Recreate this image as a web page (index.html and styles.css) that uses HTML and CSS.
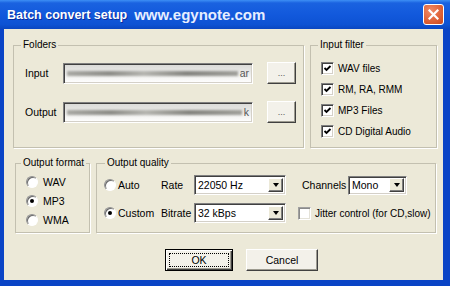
FILE: index.html
```html
<!DOCTYPE html>
<html lang="en">
<head>
  <meta charset="UTF-8">
  <meta name="viewport" content="width=device-width, initial-scale=1.0">
  <title>Batch convert setup</title>
  <link rel="stylesheet" href="styles.css">
</head>
<body>

<div class="window">
  <div class="titlebar">
    <span class="title">Batch convert setup</span>
    <span class="site">www.egynote.com</span>
    <span class="close">
      <svg width="11" height="11" viewBox="0 0 11 11"><path d="M1.5 1.5 L9.5 9.5 M9.5 1.5 L1.5 9.5" stroke="#fff" stroke-width="2.2" stroke-linecap="square"/></svg>
    </span>
  </div>

  <div class="client">
    <div class="row">
      <fieldset class="group folders">
        <legend>Folders</legend>
        <div class="folder-row">
          <span class="folder-label">Input</span>
          <div class="field"><span class="smudge"></span><span class="tail">ar</span></div>
          <button class="btn browse">...</button>
        </div>
        <div class="folder-row">
          <span class="folder-label">Output</span>
          <div class="field"><span class="smudge"></span><span class="tail">k</span></div>
          <button class="btn browse">...</button>
        </div>
      </fieldset>

      <fieldset class="group filter">
        <legend>Input filter</legend>
        <div class="check-item"><span class="checkbox"><svg width="9" height="9" viewBox="0 0 9 9"><path d="M1.5 4 L3.5 6 L7.5 2" fill="none" stroke="#000" stroke-width="1.8"/></svg></span>WAV files</div>
        <div class="check-item"><span class="checkbox"><svg width="9" height="9" viewBox="0 0 9 9"><path d="M1.5 4 L3.5 6 L7.5 2" fill="none" stroke="#000" stroke-width="1.8"/></svg></span>RM, RA, RMM</div>
        <div class="check-item"><span class="checkbox"><svg width="9" height="9" viewBox="0 0 9 9"><path d="M1.5 4 L3.5 6 L7.5 2" fill="none" stroke="#000" stroke-width="1.8"/></svg></span>MP3 Files</div>
        <div class="check-item"><span class="checkbox"><svg width="9" height="9" viewBox="0 0 9 9"><path d="M1.5 4 L3.5 6 L7.5 2" fill="none" stroke="#000" stroke-width="1.8"/></svg></span>CD Digital Audio</div>
      </fieldset>
    </div>

    <div class="row second">
      <fieldset class="group format">
        <legend>Output format</legend>
        <div class="radio-item"><span class="radio"></span>WAV</div>
        <div class="radio-item"><span class="radio on"></span>MP3</div>
        <div class="radio-item"><span class="radio"></span>WMA</div>
      </fieldset>

      <fieldset class="group quality">
        <legend>Output quality</legend>
        <div class="q-row">
          <span class="q-radio"><span class="radio"></span>Auto</span>
          <span class="q-label">Rate</span>
          <div class="combo"><span>22050 Hz</span><span class="arrow"></span></div>
          <span class="channels-label">Channels</span>
          <div class="combo small"><span>Mono</span><span class="arrow"></span></div>
        </div>
        <div class="q-row">
          <span class="q-radio"><span class="radio on"></span>Custom</span>
          <span class="q-label">Bitrate</span>
          <div class="combo"><span>32 kBps</span><span class="arrow"></span></div>
          <span class="jitter"><span class="checkbox"></span>Jitter control (for CD,slow)</span>
        </div>
      </fieldset>
    </div>

    <div class="actions">
      <button class="btn default"><span class="focus">OK</span></button>
      <button class="btn">Cancel</button>
    </div>
  </div>
</div>

</body>
</html>
```

FILE: styles.css
```css
/* Window frame */
body {
  margin: 0;
  font-family: 'Liberation Sans', Arial, sans-serif;
  font-size: 10px;
  color: #000;
}

.window {
  width: 450px;
  height: 286px;
  display: flex;
  flex-direction: column;
  background: #0a44c6;
}

.titlebar {
  height: 29px;
  flex: none;
  display: flex;
  align-items: center;
  padding: 0 6px 0 7px;
  color: #fff;
  background: linear-gradient(#3d8ff5 0, #1a62e0 3px, #1259dc 50%, #0d52d3 85%, #0a46c0 100%);
}

.title {
  font-weight: bold;
  font-size: 12.5px;
  text-shadow: 1px 1px #0c2c9c;
}

.site {
  margin-left: 7px;
  font-weight: bold;
  font-size: 15px;
  color: #e6eeff;
}

.close {
  margin-left: auto;
  width: 21px;
  height: 21px;
  box-sizing: border-box;
  border: 1px solid #fff;
  border-radius: 3px;
  background: radial-gradient(circle at 35% 30%, #f08a67, #db5a2e 70%, #c8481f);
  display: flex;
  align-items: center;
  justify-content: center;
}

.client {
  flex: 1;
  margin: 0 7px 6px 4px;
  background: #ece9d8;
  padding: 10px 0 0 9px;
}

/* Group boxes */
.row {
  display: flex;
  gap: 6px;
}

.row.second {
  margin-top: 9px;
  margin-left: 2px;
}

.group {
  margin: 0;
  padding: 0;
  min-width: 0;
  box-sizing: border-box;
  border: 1px solid #c3c0b0;
  box-shadow: 1px 1px 0 #fff;
}

.group legend {
  padding: 0 2px;
  line-height: 12px;
  white-space: nowrap;
  background: #ece9d8;
}

.folders {
  width: 291px;
  height: 109px;
  padding: 11px 0 0 11px;
}

.folders legend {
  margin-left: -4px;
}

.filter {
  width: 127px;
  height: 109px;
  padding: 11px 0 0 10px;
}

.filter legend {
  margin-left: -3px;
}

.format {
  width: 75px;
  height: 76px;
  padding: 6px 0 0 10px;
}

.format legend {
  margin-left: -5px;
}

.quality {
  width: 340px;
  height: 76px;
  padding: 6px 0 0 7px;
}

.quality legend {
  margin-left: 1px;
}

/* Folders */
.folder-row {
  display: flex;
  align-items: center;
  height: 22px;
}

.folder-row + .folder-row {
  margin-top: 17px;
}

.folder-label {
  width: 38px;
  font-size: 10.5px;
}

.field {
  width: 190px;
  height: 21px;
  box-sizing: border-box;
  display: flex;
  align-items: center;
  padding: 0 3px;
  border: 1px solid;
  border-color: #808080 #fff #fff #808080;
  box-shadow: inset 1px 1px #404040, inset -1px -1px #d4d0c8;
  background: linear-gradient(#d9d9d6, #f4f4f2 70%, #fff);
}

.smudge {
  flex: 1;
  height: 5px;
  margin-right: 2px;
  background: linear-gradient(90deg, #a9a9a4, #8d8d88 25%, #b5b5b0 45%, #858580 70%, #a0a09b);
  filter: blur(1.2px);
}

.tail {
  color: #555;
  font-size: 10.5px;
}

.btn {
  font: inherit;
  color: #000;
  box-sizing: border-box;
  padding: 0;
  background: #f3f1ea;
  border: 1px solid;
  border-color: #fff #404040 #404040 #fff;
  box-shadow: inset -1px -1px #9d9b90;
}

.browse {
  width: 29px;
  height: 22px;
  margin-left: 14px;
  color: #555;
  font-size: 9px;
}

/* Checkboxes and radios */
.checkbox {
  width: 13px;
  height: 13px;
  flex: none;
  box-sizing: border-box;
  display: flex;
  align-items: center;
  justify-content: center;
  border: 1px solid;
  border-color: #808080 #fff #fff #808080;
  box-shadow: inset 1px 1px #404040, inset -1px -1px #d4d0c8;
  background: #fff;
}

.check-item {
  display: flex;
  align-items: center;
  gap: 4px;
  height: 13px;
}

.check-item + .check-item {
  margin-top: 8px;
}

.radio {
  width: 12px;
  height: 12px;
  flex: none;
  box-sizing: border-box;
  border-radius: 50%;
  display: flex;
  align-items: center;
  justify-content: center;
  border: 1px solid;
  border-color: #909090 #fff #fff #909090;
  box-shadow: inset 1px 1px #6a6a6a;
  background: #fff;
}

.radio.on::after {
  content: "";
  width: 4px;
  height: 4px;
  border-radius: 50%;
  background: #000;
}

.radio-item {
  display: flex;
  align-items: center;
  gap: 5px;
  height: 13px;
  font-size: 10.5px;
}

.radio-item + .radio-item {
  margin-top: 6px;
}

/* Output quality */
.q-row {
  display: flex;
  align-items: center;
  height: 20px;
}

.q-row + .q-row {
  margin-top: 8px;
}

.q-radio {
  width: 57px;
  display: flex;
  align-items: center;
  gap: 2px;
  font-size: 10.5px;
}

.q-label {
  width: 33px;
  font-size: 10.5px;
}

.combo {
  width: 92px;
  height: 20px;
  box-sizing: border-box;
  display: flex;
  align-items: center;
  padding-left: 3px;
  border: 1px solid;
  border-color: #808080 #fff #fff #808080;
  box-shadow: inset 1px 1px #404040, inset -1px -1px #d4d0c8;
  background: #fff;
  font-size: 10.5px;
}

.combo .arrow {
  margin: 0 2px 0 auto;
  width: 15px;
  height: 14px;
  box-sizing: border-box;
  display: flex;
  align-items: center;
  justify-content: center;
  background: #ece9d8;
  border: 1px solid;
  border-color: #fff #404040 #404040 #fff;
  box-shadow: inset -1px -1px #808080;
}

.combo .arrow::after {
  content: "";
  border-left: 3.5px solid transparent;
  border-right: 3.5px solid transparent;
  border-top: 4px solid #000;
}

.combo.small {
  width: 59px;
  height: 19px;
}

.channels-label {
  margin-left: 16px;
  width: 46px;
  font-size: 10.5px;
}

.jitter {
  margin-left: 12px;
  display: flex;
  align-items: center;
  gap: 4px;
}

.jitter .checkbox {
  border-color: #a0a0a0 #fff #fff #a0a0a0;
  box-shadow: inset 1px 1px #8a8a8a, inset -1px -1px #e4e2d8;
}

/* Dialog buttons */
.actions {
  display: flex;
  gap: 13px;
  margin-top: 16px;
  padding-left: 152px;
}

.actions .btn {
  width: 72px;
  height: 22px;
  font-size: 10.5px;
}

.actions .btn.default {
  width: 68px;
  border: 1px solid #000;
  box-shadow: inset 1px 1px #fff, inset -1px -1px #404040, inset -2px -2px #9d9b90;
  padding: 3px;
}

.focus {
  display: flex;
  align-items: center;
  justify-content: center;
  height: 100%;
  box-sizing: border-box;
  border: 1px dotted #000;
}
```
